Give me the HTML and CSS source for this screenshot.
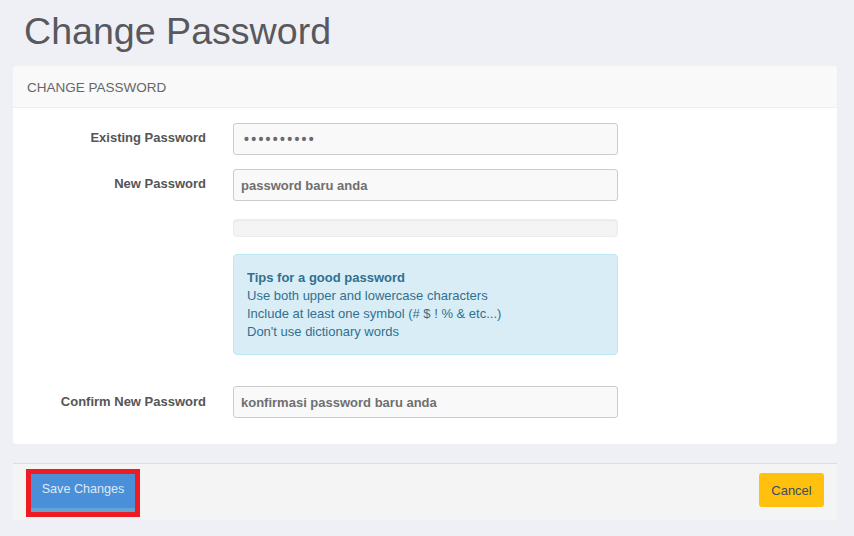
FILE: index.html
```html
<!DOCTYPE html>
<html>
<head>
<meta charset="utf-8">
<title>Change Password</title>
<link rel="stylesheet" href="styles.css">
</head>
<body>
<div class="page">
  <h1 class="page-title">Change Password</h1>
  <div class="panel">
    <div class="panel-heading">CHANGE PASSWORD</div>
    <div class="panel-body">
      <div class="form-grid">
        <label class="control-label">Existing Password</label>
        <input class="form-control pw" type="password" value="abcdefghij">

        <label class="control-label">New Password</label>
        <input class="form-control" type="password" placeholder="password baru anda">

        <div></div>
        <div class="progress"></div>

        <div></div>
        <div class="alert">
          <div class="alert-title">Tips for a good password</div>
          <div>Use both upper and lowercase characters</div>
          <div>Include at least one symbol (# $ ! % &amp; etc...)</div>
          <div>Don't use dictionary words</div>
        </div>

        <label class="control-label confirm">Confirm New Password</label>
        <input class="form-control confirm-input" type="password" placeholder="konfirmasi password baru anda">
      </div>
    </div>
  </div>
  <div class="panel-footer">
    <button class="btn btn-save">Save Changes</button>
    <button class="btn btn-cancel">Cancel</button>
  </div>
</div>
</body>
</html>
```
FILE: styles.css
```css
* { box-sizing: border-box; }
html, body {
  margin: 0;
  padding: 0;
  background: #eff0f5;
  font-family: "Liberation Sans", Arial, Helvetica, sans-serif;
  font-size: 13px;
  color: #555;
}
.page {
  padding: 0 17px 0 13px;
}
.page-title {
  margin: 9px 0 0 11px;
  font-size: 37.6px;
  font-weight: normal;
  color: #58585d;
  line-height: 44px;
  height: 57px;
}
.panel {
  background: #fff;
  border-radius: 3px;
}
.panel-heading {
  height: 42px;
  padding: 1px 14px 0 14px;
  display: flex;
  align-items: center;
  background: #f9f9f9;
  border-bottom: 1px solid #eeeeee;
  border-radius: 3px 3px 0 0;
  color: #666;
  font-size: 13.5px;
}
.panel-body {
  padding: 15px 0 26px 0;
}
.form-grid {
  display: grid;
  grid-template-columns: 193px 385px;
  column-gap: 27px;
  align-items: start;
}
.control-label {
  text-align: right;
  font-weight: bold;
  color: #555;
  padding-top: 7px;
  line-height: 16px;
}
.form-control {
  height: 32px;
  width: 385px;
  background: #f9f9f9;
  border: 1px solid #cccccc;
  border-radius: 3px;
  padding: 0 7px;
  font-family: "Liberation Sans", Arial, sans-serif;
  font-size: 13px;
  font-weight: bold;
  color: #666;
  margin-bottom: 14px;
  outline: none;
}
.form-control::placeholder {
  color: #6f6f6f;
  opacity: 1;
}
.pw {
  letter-spacing: 2.3px;
  font-size: 14px;
  color: #6a6a6a;
  padding-left: 10px;
}
.progress {
  height: 18px;
  margin-top: 4px;
  background: #f4f4f4;
  border: 1px solid #ececec;
  border-radius: 4px;
  box-shadow: inset 0 1px 2px rgba(0,0,0,0.05);
}
.alert {
  margin-top: 17px;
  background: #d9edf7;
  border: 1px solid #bce8f1;
  border-radius: 4px;
  padding: 14px 13px 14px 13px;
  color: #31708f;
  line-height: 18px;
  height: 101px;
}
.alert-title {
  font-weight: bold;
}
.confirm {
  margin-top: 32px;
}
.confirm-input {
  margin-top: 31px;
  margin-bottom: 0;
}
.panel-footer {
  margin-top: 19px;
  height: 57px;
  background: #f4f4f5;
  border-top: 1px solid #dddddd;
  display: flex;
  justify-content: space-between;
  align-items: flex-start;
  padding: 10px 13px 0 18px;
}
.btn {
  font-family: "Liberation Sans", Arial, sans-serif;
  font-size: 13px;
  border: none;
  cursor: pointer;
}
.btn-save {
  width: 104px;
  height: 38px;
  background: #4a90d9;
  color: #dfe9f6;
  border-bottom: 4px solid #62a5d4;
  padding: 0 0 4px 0;
  font-size: 12.6px;
  outline: 5px solid #ed1c24;
  border-radius: 0;
}
.btn-cancel {
  margin-top: -1px;
  width: 65px;
  height: 34px;
  background: #ffc10e;
  color: #3b4a6b;
  border-radius: 3px;
  padding: 0;
}
```
